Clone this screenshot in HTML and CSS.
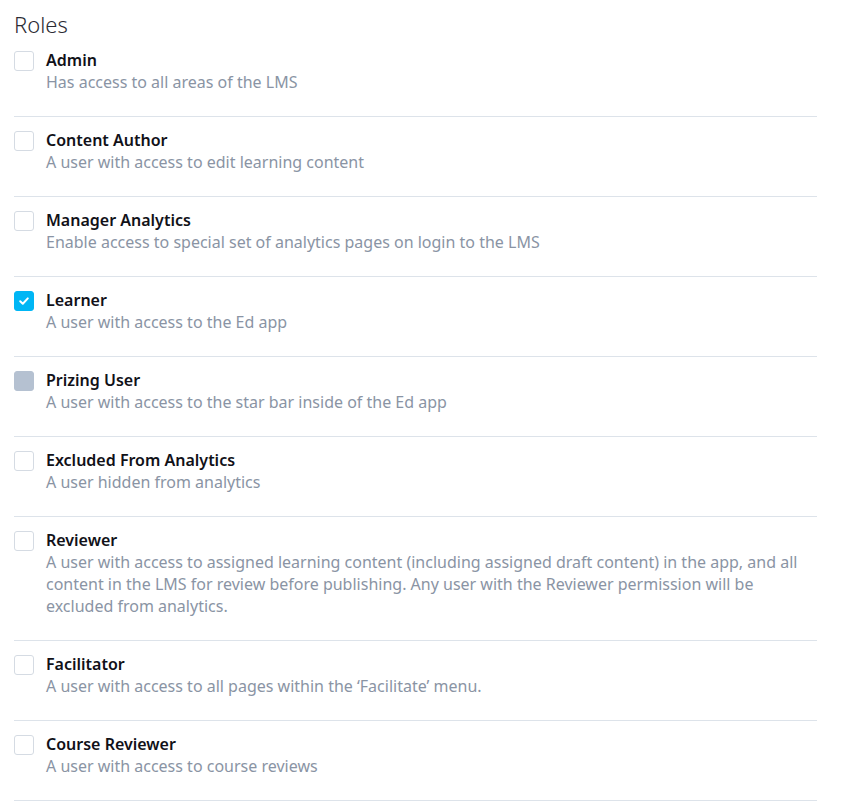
FILE: index.html
```html
<!DOCTYPE html>
<html>
<head>
    <meta name="viewport" content="width=device-width, initial-scale=1">
    <link rel="stylesheet" href="styles.css">
</head>
<body>
<div class="roles">
    <h2 class="roles-title">Roles</h2>

    <div class="role">
        <span class="box"></span>
        <div class="role-text">
            <div class="role-name">Admin</div>
            <div class="role-desc">Has access to all areas of the LMS</div>
        </div>
    </div>

    <div class="role">
        <span class="box"></span>
        <div class="role-text">
            <div class="role-name">Content Author</div>
            <div class="role-desc">A user with access to edit learning content</div>
        </div>
    </div>

    <div class="role">
        <span class="box"></span>
        <div class="role-text">
            <div class="role-name">Manager Analytics</div>
            <div class="role-desc">Enable access to special set of analytics pages on login to the LMS</div>
        </div>
    </div>

    <div class="role">
        <span class="box checked">
            <svg width="12" height="12" viewBox="0 0 12 12"><path d="M2.2 6.2 L4.8 8.7 L9.8 3.4" fill="none" stroke="#fff" stroke-width="2" stroke-linecap="round" stroke-linejoin="round"/></svg>
        </span>
        <div class="role-text">
            <div class="role-name">Learner</div>
            <div class="role-desc">A user with access to the Ed app</div>
        </div>
    </div>

    <div class="role">
        <span class="box disabled"></span>
        <div class="role-text">
            <div class="role-name">Prizing User</div>
            <div class="role-desc">A user with access to the star bar inside of the Ed app</div>
        </div>
    </div>

    <div class="role">
        <span class="box"></span>
        <div class="role-text">
            <div class="role-name">Excluded From Analytics</div>
            <div class="role-desc">A user hidden from analytics</div>
        </div>
    </div>

    <div class="role">
        <span class="box"></span>
        <div class="role-text">
            <div class="role-name">Reviewer</div>
            <div class="role-desc">A user with access to assigned learning content (including assigned draft content) in the app, and all content in the LMS for review before publishing. Any user with the Reviewer permission will be excluded from analytics.</div>
        </div>
    </div>

    <div class="role">
        <span class="box"></span>
        <div class="role-text">
            <div class="role-name">Facilitator</div>
            <div class="role-desc">A user with access to all pages within the ‘Facilitate’ menu.</div>
        </div>
    </div>

    <div class="role">
        <span class="box"></span>
        <div class="role-text">
            <div class="role-name">Course Reviewer</div>
            <div class="role-desc">A user with access to course reviews</div>
        </div>
    </div>
</div>
</body>
</html>
```

FILE: styles.css
```css
* {
    box-sizing: border-box;
}

body {
    margin: 0;
    background: #fff;
    font-family: "Noto Sans", "Open Sans", sans-serif;
}

.roles {
    width: 817px;
    padding: 10px 0 0 14px;
}

.roles-title {
    margin: 0 0 2px 0;
    font-size: 22px;
    font-weight: 300;
    line-height: 28px;
    color: #2b2b33;
}

.role {
    display: flex;
    gap: 12px;
    padding: 9px 0 23px 0;
    border-bottom: 1px solid #dde3ea;
}

.role + .role {
    padding-top: 12px;
}

.box {
    flex: none;
    width: 20px;
    height: 20px;
    margin-top: 2px;
    border: 1px solid #d5dbe3;
    border-radius: 3px;
    background: #fff;
    display: flex;
    align-items: center;
    justify-content: center;
}

.box.checked {
    background: #00b6f5;
    border-color: #00b6f5;
}

.box.disabled {
    background: #b5c1d1;
    border-color: #b5c1d1;
}

.role-name {
    font-size: 16px;
    font-weight: 600;
    line-height: 22px;
    color: #111118;
}

.role-desc {
    font-size: 16px;
    line-height: 22px;
    color: #8a94a4;
}
```
